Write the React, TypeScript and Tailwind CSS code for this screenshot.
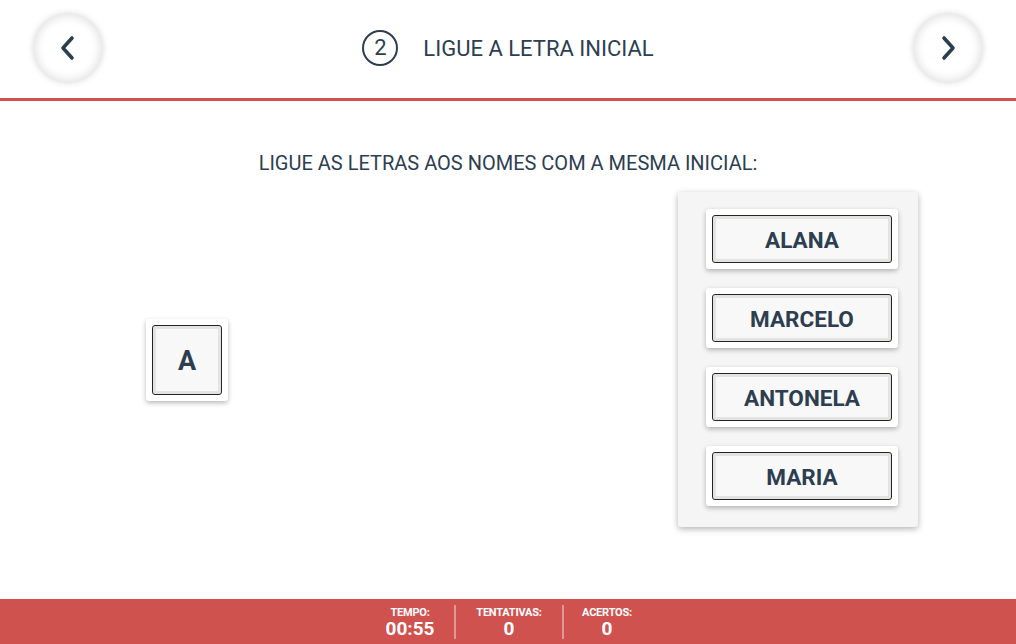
import React from "react";

const NAMES = ["ALANA", "MARCELO", "ANTONELA", "MARIA"];

const STATS = [
  { label: "TEMPO:", value: "00:55", w: "w-[88px]" },
  { label: "TENTATIVAS:", value: "0", w: "w-[108px]" },
  { label: "ACERTOS:", value: "0", w: "w-[88px]" },
];

function NavButton({ dir }: { dir: "left" | "right" }) {
  return (
    <button className="w-[70px] h-[70px] rounded-full bg-white flex items-center justify-center shadow-[0_0_6px_rgba(0,0,0,0.14),inset_0_0_8px_3px_rgba(0,0,0,0.11)]">
      <svg width="16" height="26" viewBox="0 0 16 26" fill="none">
        <polyline
          points={dir === "left" ? "12,3 3,13 12,23" : "4,3 13,13 4,23"}
          stroke="#2c3e50"
          strokeWidth="3.6"
          strokeLinecap="round"
          strokeLinejoin="round"
        />
      </svg>
    </button>
  );
}

function Tile({ children, className }: { children: React.ReactNode; className: string }) {
  return (
    <div className={`bg-white rounded-[3px] p-[6px] shadow-[0_2px_5px_rgba(0,0,0,0.28)] ${className}`}>
      <div className="w-full h-full rounded-[3px] border border-[#2a211c] bg-[#f8f8f8] shadow-[inset_0_0_0_3px_#e2e4e4] flex items-center justify-center pt-[3px] font-bold text-[#2c3e50]">
        {children}
      </div>
    </div>
  );
}

export default function App() {
  return (
    <div className="w-[1016px] h-[644px] flex flex-col bg-white text-[#2c3e50] font-['Roboto',sans-serif]">
      <header className="h-[101px] shrink-0 border-b-[3px] border-[#d0524f] flex items-center justify-between px-[33px] pb-[2px]">
        <NavButton dir="left" />
        <div className="flex items-center gap-[25px]">
          <div className="w-[36px] h-[36px] rounded-full border-2 border-[#2c3e50] flex items-center justify-center text-[22px] leading-none">2</div>
          <h1 className="text-[22px]">LIGUE A LETRA INICIAL</h1>
        </div>
        <NavButton dir="right" />
      </header>

      <main className="flex-1 flex flex-col">
        <p className="text-center text-[20px] mt-[50px] leading-[24px]">LIGUE AS LETRAS AOS NOMES COM A MESMA INICIAL:</p>
        <div className="flex items-center justify-between pl-[146px] pr-[98px] mt-[17px]">
          <Tile className="w-[82px] h-[82px] p-[5px]">
            <span className="text-[27px]">A</span>
          </Tile>
          <div className="w-[240px] bg-[#f5f5f5] rounded-[3px] shadow-[0_2px_6px_rgba(0,0,0,0.3)] pl-[28px] pr-[20px] pt-[17px] pb-[21px] flex flex-col gap-[19px]">
            {NAMES.map((n) => (
              <Tile key={n} className="w-[192px] h-[60px]">
                <span className="text-[22.5px]">{n}</span>
              </Tile>
            ))}
          </div>
        </div>
      </main>

      <footer className="h-[45px] shrink-0 bg-[#d0524f] flex items-center justify-center text-white">
        {STATS.map((s, i) => (
          <div key={s.label} className={`${s.w} flex flex-col items-center ${i > 0 ? "border-l-2 border-white/40" : ""} h-[34px] justify-center`}>
            <span className="text-[11px] font-bold leading-[13px] tracking-[-0.2px]">{s.label}</span>
            <span className="text-[19px] font-bold leading-[19px]">{s.value}</span>
          </div>
        ))}
      </footer>
    </div>
  );
}
